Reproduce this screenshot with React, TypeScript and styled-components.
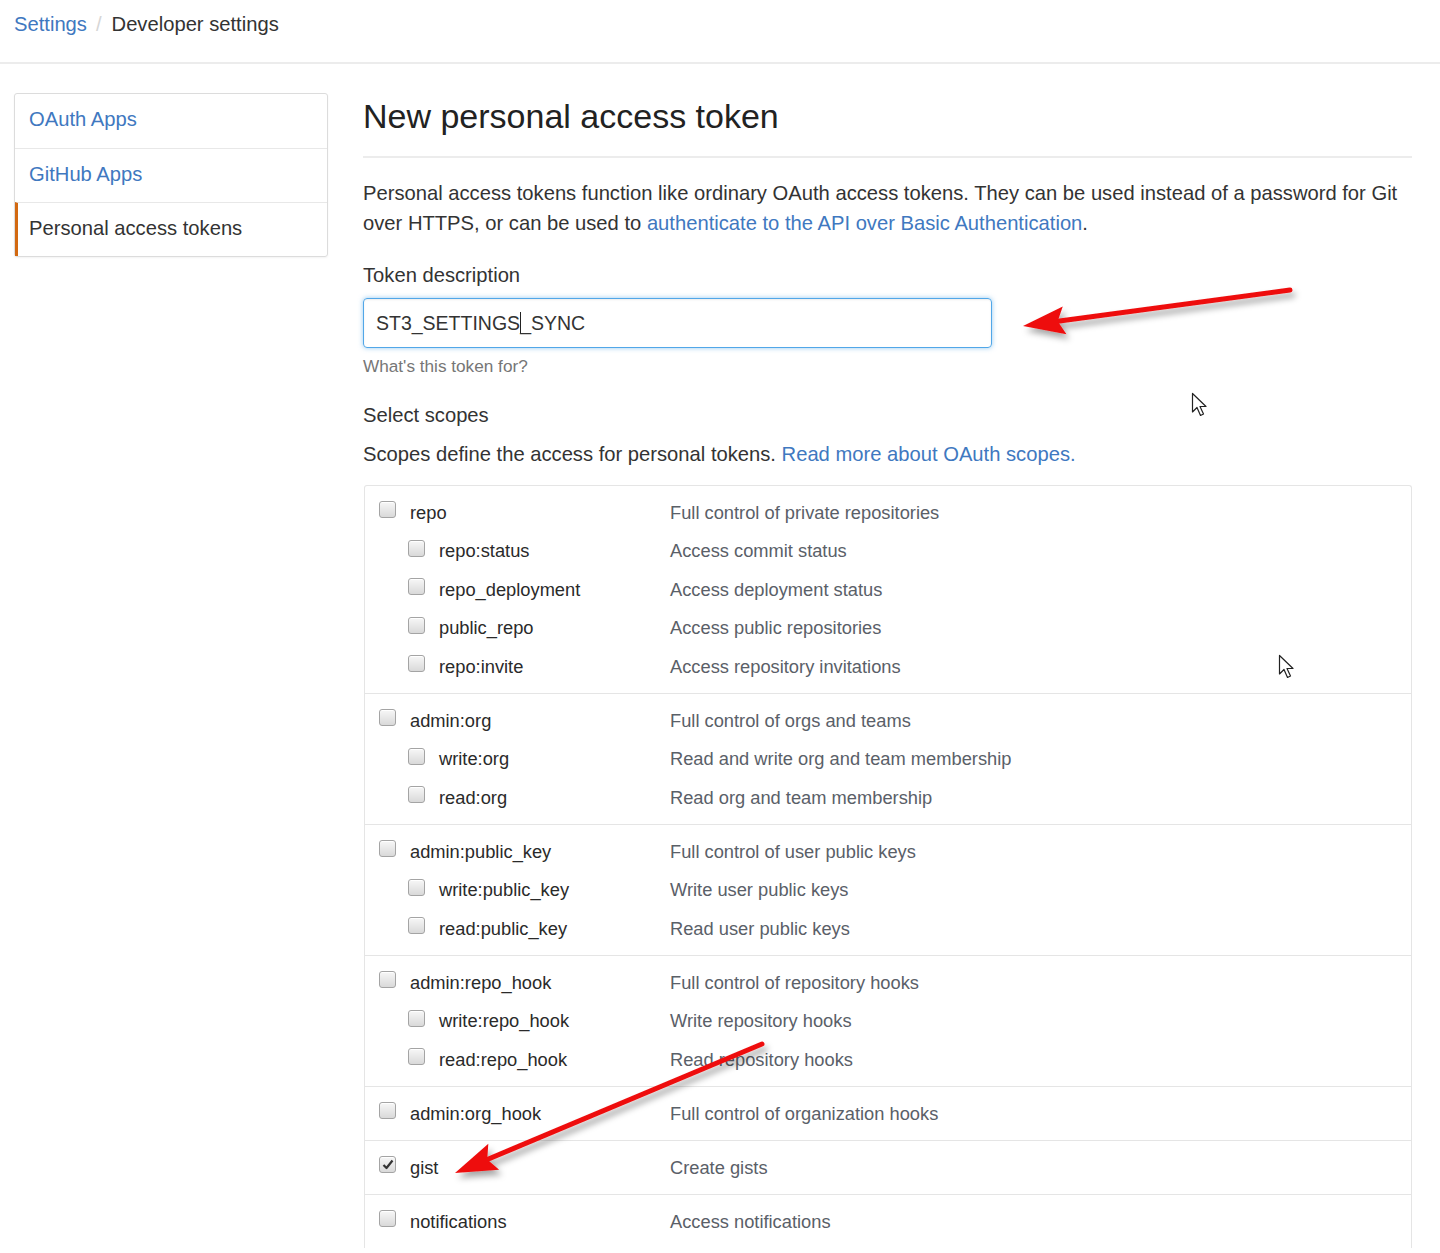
import React from "react";
import styled, { createGlobalStyle } from "styled-components";

const Global = createGlobalStyle`
  html, body { margin: 0; padding: 0; background: #fff; }
  body {
    font-family: "Liberation Sans", Arial, Helvetica, sans-serif;
    color: #333;
    -webkit-font-smoothing: antialiased;
  }
  * { box-sizing: border-box; }
`;

const Page = styled.div`
  position: relative;
  width: 1440px;
  min-height: 1253px;
  overflow: hidden;
`;

const Header = styled.header`
  height: 64px;
  padding: 10px 14px 0;
  border-bottom: 2px solid #ececec;
  font-size: 20.2px;
  line-height: 28px;
`;

const Crumb = styled.a`
  color: #4078c0;
  text-decoration: none;
`;

const Sep = styled.span`
  color: #d6d6d6;
  margin: 0 9px 0 9px;
`;

const Current = styled.span`
  color: #333;
  margin-left: 1px;
`;

const Layout = styled.div`
  display: flex;
  align-items: flex-start;
  gap: 35px;
  padding: 29px 28px 0 14px;
`;

const SideNav = styled.nav`
  width: 314px;
  flex: none;
  border: 1px solid #dcdcdc;
  border-radius: 3px;
  box-shadow: 0 1px 2px rgba(0, 0, 0, 0.05);
`;

const NavItem = styled.a<{ $active?: boolean }>`
  display: flex;
  align-items: center;
  height: 54px;
  padding: 0 0 3px ${(p) => (p.$active ? "11px" : "14px")};
  border-left: ${(p) => (p.$active ? "3px solid #d26911" : "none")};
  border-top: 1px solid #e8e8e8;
  font-size: 20.2px;
  color: ${(p) => (p.$active ? "#333" : "#4078c0")};
  text-decoration: none;
  &:first-child { border-top: none; }
`;

const Main = styled.main`
  flex: 1;
  min-width: 0;
`;

const Title = styled.h1`
  margin: 0;
  padding: 0 0 17px;
  font-size: 34px;
  font-weight: normal;
  line-height: 46px;
  color: #222;
  border-bottom: 2px solid #ececec;
`;

const Lead = styled.p`
  margin: 20px 0 0;
  font-size: 20.2px;
  line-height: 30px;
  color: #333;
`;

const Link = styled.a`
  color: #4078c0;
  text-decoration: none;
`;

const Label = styled.div<{ $gap?: number }>`
  margin-top: ${(p) => p.$gap ?? 22}px;
  font-size: 20.2px;
  line-height: 30px;
  color: #333;
`;

const TextField = styled.div`
  margin-top: 8px;
  width: 629px;
  height: 50px;
  display: flex;
  align-items: center;
  padding-left: 12px;
  border: 1px solid #51a7e8;
  border-radius: 4px;
  box-shadow: inset 0 1px 2px rgba(0, 0, 0, 0.075), 0 0 5px rgba(81, 167, 232, 0.6);
  font-size: 19.5px;
  color: #333;
`;

const Caret = styled.span`
  display: inline-block;
  width: 1px;
  height: 22px;
  background: #222;
  margin: 0 -1px 0 0;
  vertical-align: middle;
`;

const Note = styled.div`
  margin-top: 6px;
  font-size: 17.2px;
  line-height: 24px;
  color: #767676;
`;

const Text = styled.p<{ $gap?: number }>`
  margin: ${(p) => p.$gap ?? 9}px 0 0;
  font-size: 20.2px;
  line-height: 30px;
  color: #333;
`;

const ScopeBox = styled.div`
  margin-top: 16px;
  border: 1px solid #e5e5e5;
  border-bottom: none;
  border-radius: 3px 3px 0 0;
  margin-left: 1px;
`;

const Group = styled.div`
  padding: 7.25px 0;
  border-top: 1px solid #e5e5e5;
  &:first-child { border-top: none; }
`;

const Row = styled.div`
  display: grid;
  grid-template-columns: 305px 1fr;
  height: 38.5px;
  align-items: center;
  font-size: 18.3px;
`;

const Name = styled.label<{ $sub?: boolean }>`
  display: flex;
  align-items: center;
  gap: 14px;
  padding-left: ${(p) => (p.$sub ? "43px" : "14px")};
  color: #2a2a2a;
`;

const Desc = styled.span`
  color: #5a6068;
`;

const Box = styled.span<{ $checked?: boolean }>`
  width: 17px;
  height: 17px;
  flex: none;
  border: 1px solid #a4a4a4;
  border-radius: 3px;
  background: linear-gradient(#f7f7f7, #d9d9d9);
  box-shadow: inset 0 1px 0 #fff;
  transform: translateY(-3px);
  display: flex;
  align-items: center;
  justify-content: center;
`;

const Overlay = styled.svg`
  position: absolute;
  left: 0;
  top: 0;
  pointer-events: none;
`;

type Scope = { name: string; desc: string; sub?: boolean; checked?: boolean };

const groups: Scope[][] = [
  [
    { name: "repo", desc: "Full control of private repositories" },
    { name: "repo:status", desc: "Access commit status", sub: true },
    { name: "repo_deployment", desc: "Access deployment status", sub: true },
    { name: "public_repo", desc: "Access public repositories", sub: true },
    { name: "repo:invite", desc: "Access repository invitations", sub: true },
  ],
  [
    { name: "admin:org", desc: "Full control of orgs and teams" },
    { name: "write:org", desc: "Read and write org and team membership", sub: true },
    { name: "read:org", desc: "Read org and team membership", sub: true },
  ],
  [
    { name: "admin:public_key", desc: "Full control of user public keys" },
    { name: "write:public_key", desc: "Write user public keys", sub: true },
    { name: "read:public_key", desc: "Read user public keys", sub: true },
  ],
  [
    { name: "admin:repo_hook", desc: "Full control of repository hooks" },
    { name: "write:repo_hook", desc: "Write repository hooks", sub: true },
    { name: "read:repo_hook", desc: "Read repository hooks", sub: true },
  ],
  [{ name: "admin:org_hook", desc: "Full control of organization hooks" }],
  [{ name: "gist", desc: "Create gists", checked: true }],
  [{ name: "notifications", desc: "Access notifications" }],
];

function Check({ checked }: { checked?: boolean }) {
  return (
    <Box $checked={checked}>
      {checked && (
        <svg width="12" height="11" viewBox="0 0 12 11">
          <path d="M1.5 6 L4.5 9 L10.5 1.5" fill="none" stroke="#333" strokeWidth="2.2" strokeLinejoin="round" />
        </svg>
      )}
    </Box>
  );
}

function Cursor({ x, y }: { x: number; y: number }) {
  return (
    <path
      transform={`translate(${x} ${y})`}
      d="M0.5 0.5 L0.5 19 L5 14.5 L8.5 22.5 L11.5 21 L8 13.5 L14 13.5 Z"
      fill="#fff"
      stroke="#222"
      strokeWidth="1.2"
      strokeLinejoin="round"
    />
  );
}

function RedArrow({ x1, y1, x2, y2 }: { x1: number; y1: number; x2: number; y2: number }) {
  const dx = x2 - x1;
  const dy = y2 - y1;
  const len = Math.hypot(dx, dy);
  const ux = dx / len;
  const uy = dy / len;
  const nx = -uy;
  const ny = ux;
  const headLen = 42;
  const headW = 14;
  const bx = x2 - ux * headLen;
  const by = y2 - uy * headLen;
  const nb = 7;
  const nx2 = x2 - ux * (headLen - nb);
  const ny2 = y2 - uy * (headLen - nb);
  const head = `M${x2} ${y2} L${bx + nx * headW} ${by + ny * headW} L${nx2} ${ny2} L${bx - nx * headW} ${by - ny * headW} Z`;
  return (
    <g filter="url(#arrowShadow)">
      <line x1={x1} y1={y1} x2={nx2} y2={ny2} stroke="#ee1111" strokeWidth="5" strokeLinecap="round" />
      <path d={head} fill="#ee1111" />
    </g>
  );
}

export default function App() {
  return (
    <Page>
      <Global />
      <Header>
        <Crumb href="#">Settings</Crumb>
        <Sep>/</Sep>
        <Current>Developer settings</Current>
      </Header>
      <Layout>
        <SideNav>
          <NavItem href="#">OAuth Apps</NavItem>
          <NavItem href="#">GitHub Apps</NavItem>
          <NavItem href="#" $active>
            Personal access tokens
          </NavItem>
        </SideNav>
        <Main>
          <Title>New personal access token</Title>
          <Lead>
            Personal access tokens function like ordinary OAuth access tokens. They can be used instead of a password for Git
            over HTTPS, or can be used to <Link href="#">authenticate to the API over Basic Authentication</Link>.
          </Lead>
          <Label>Token description</Label>
          <TextField role="textbox">
            ST3_SETTINGS
            <Caret />
            _SYNC
          </TextField>
          <Note>What's this token for?</Note>
          <Label $gap={22}>Select scopes</Label>
          <Text>
            Scopes define the access for personal tokens. <Link href="#">Read more about OAuth scopes.</Link>
          </Text>
          <ScopeBox>
            {groups.map((g, gi) => (
              <Group key={gi}>
                {g.map((s) => (
                  <Row key={s.name}>
                    <Name $sub={s.sub}>
                      <Check checked={s.checked} />
                      {s.name}
                    </Name>
                    <Desc>{s.desc}</Desc>
                  </Row>
                ))}
              </Group>
            ))}
          </ScopeBox>
        </Main>
      </Layout>
      <Overlay width="1440" height="1253" viewBox="0 0 1440 1253">
        <defs>
          <filter id="arrowShadow" x="-20%" y="-50%" width="140%" height="200%">
            <feDropShadow dx="3" dy="5" stdDeviation="3" floodColor="#000" floodOpacity="0.35" />
          </filter>
        </defs>
        <RedArrow x1={1290} y1={290} x2={1023} y2={326} />
        <RedArrow x1={762} y1={1044} x2={455} y2={1173} />
        <Cursor x={1192} y={393} />
        <Cursor x={1279} y={655} />
      </Overlay>
    </Page>
  );
}
